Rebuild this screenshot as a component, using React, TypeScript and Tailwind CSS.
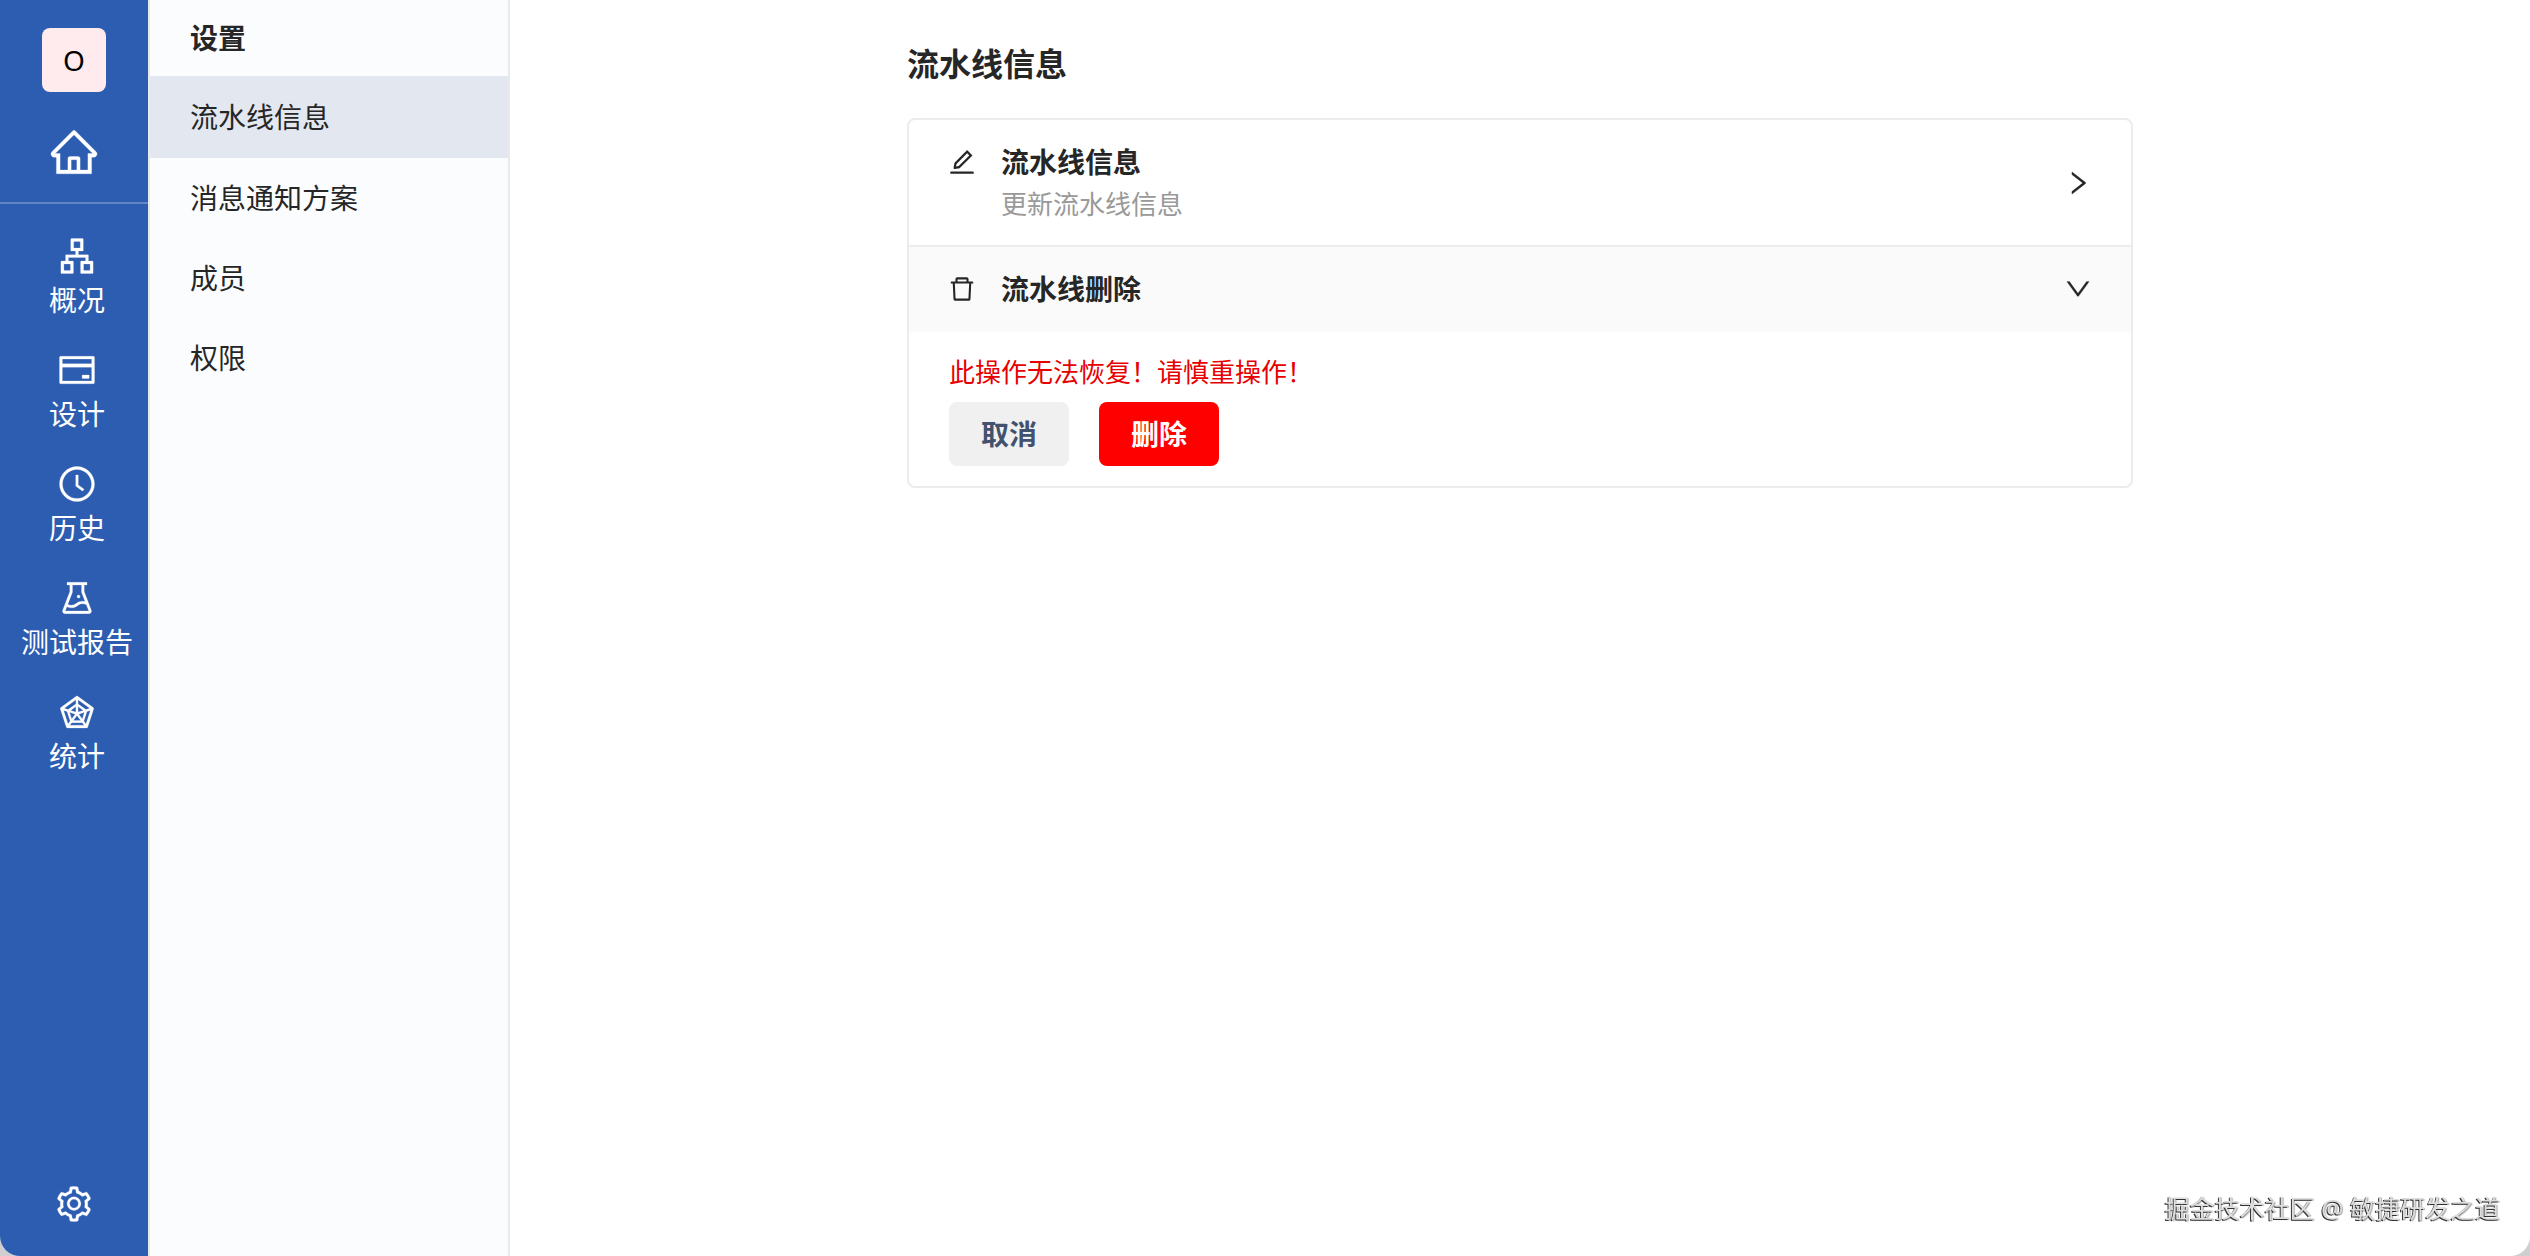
import { useState } from 'react'
import type { IconType } from 'react-icons'
import {
  AiOutlineApartment,
  AiOutlineClockCircle,
  AiOutlineCreditCard,
  AiOutlineDelete,
  AiOutlineDown,
  AiOutlineEdit,
  AiOutlineExperiment,
  AiOutlineHome,
  AiOutlineRadarChart,
  AiOutlineRight,
  AiOutlineSetting,
} from 'react-icons/ai'

const navItems: { key: string; label: string; icon: IconType }[] = [
  { key: 'survey', label: '概况', icon: AiOutlineApartment },
  { key: 'design', label: '设计', icon: AiOutlineCreditCard },
  { key: 'history', label: '历史', icon: AiOutlineClockCircle },
  { key: 'test', label: '测试报告', icon: AiOutlineExperiment },
  { key: 'statistics', label: '统计', icon: AiOutlineRadarChart },
]

const settingItems = [
  { key: 'info', label: '流水线信息' },
  { key: 'message', label: '消息通知方案' },
  { key: 'member', label: '成员' },
  { key: 'power', label: '权限' },
]

function SideNav() {
  return (
    <nav className="flex w-[148px] shrink-0 flex-col bg-[#2d5db1] text-white">
      <div className="flex h-[204px] flex-col items-center border-b-2 border-[#6286c4] pt-7">
        <a
          href="#pipeline"
          className="flex size-16 items-center justify-center rounded-lg bg-[#ffebee] text-[28px] text-black"
        >
          O
        </a>
        <a href="#home" aria-label="首页" className="mt-[34px]">
          <AiOutlineHome className="size-[52px] stroke-[6px]" />
        </a>
      </div>
      <ul className="flex flex-col gap-[30px] pt-8 pl-1.5">
        {navItems.map(({ key, label, icon: Icon }) => (
          <li key={key}>
            <a href={`#${key}`} className="flex flex-col items-center gap-1 text-[28px] leading-10 whitespace-nowrap">
              <Icon className="size-10 stroke-[6px]" />
              {label}
            </a>
          </li>
        ))}
      </ul>
      <a href="#setting" aria-label="设置" className="mt-auto mb-8 self-center">
        <AiOutlineSetting className="size-10 stroke-[6px]" />
      </a>
    </nav>
  )
}

function SettingMenu() {
  const [active, setActive] = useState('info')

  return (
    <aside className="w-[362px] shrink-0 border-x-2 border-[#e8eaee] bg-[#fbfcfe]">
      <h2 className="flex h-[76px] items-center pl-10 font-bold">设置</h2>
      <ul>
        {settingItems.map(({ key, label }) => (
          <li key={key}>
            <a
              href={`#${key}`}
              onClick={() => setActive(key)}
              className={`flex items-center pl-10 ${active === key ? 'h-[82px] bg-[#e3e7ef]' : 'h-20'}`}
            >
              {label}
            </a>
          </li>
        ))}
      </ul>
    </aside>
  )
}

export default function App() {
  const [open, setOpen] = useState(true)

  return (
    <div className="min-h-screen bg-[#cfcfd2] font-['Noto_Sans','Noto_Sans_CJK_SC',sans-serif] text-[28px] leading-10 text-[#262626]">
      <div className="flex min-h-screen overflow-hidden rounded-b-[20px] bg-white">
        <SideNav />
        <SettingMenu />
        <main className="flex-1 px-10">
          <div className="mx-auto max-w-[1226px]">
            <h1 className="pt-10 pb-[30px] text-[32px] leading-12 font-bold">流水线信息</h1>
            <div className="overflow-hidden rounded-lg border-2 border-[#ececec]">
              <button type="button" className="flex h-[125px] w-full items-center px-[38px] text-left">
                <AiOutlineEdit className="mt-[27px] size-[30px] self-start" />
                <span className="ml-6 flex-1 leading-[42px]">
                  <span className="block font-bold">流水线信息</span>
                  <span className="block text-[26px] text-[#999]">更新流水线信息</span>
                </span>
                <AiOutlineRight className="size-[30px] stroke-[6px]" />
              </button>
              <button
                type="button"
                aria-expanded={open}
                onClick={() => setOpen(!open)}
                className="flex h-[87px] w-full items-center border-t-2 border-[#ececec] bg-[#fafafa] px-[38px] pb-0.5 text-left font-bold"
              >
                <AiOutlineDelete className="size-[30px]" />
                <span className="ml-6 flex-1">流水线删除</span>
                <AiOutlineDown className="size-[30px] stroke-[6px]" />
              </button>
              {open ? (
                <div className="px-10 pt-5 pb-5">
                  <p className="text-[26px] text-[#e60000]">此操作无法恢复！请慎重操作！</p>
                  <div className="mt-2.5 flex gap-[30px]">
                    <button
                      type="button"
                      onClick={() => setOpen(false)}
                      className="h-16 w-[120px] rounded-lg bg-[#f0f0f0] font-bold text-[#42526e]"
                    >
                      取消
                    </button>
                    <button type="button" className="h-16 w-[120px] rounded-lg bg-[#ff0000] font-bold text-white">
                      删除
                    </button>
                  </div>
                </div>
              ) : null}
            </div>
          </div>
        </main>
      </div>
      <p className="fixed right-[30px] bottom-7 text-[25px] text-[#dddddd] [text-shadow:-1px_1px_0_#333,1px_1px_1px_#aaa]">
        掘金技术社区 @ 敏捷研发之道
      </p>
    </div>
  )
}
